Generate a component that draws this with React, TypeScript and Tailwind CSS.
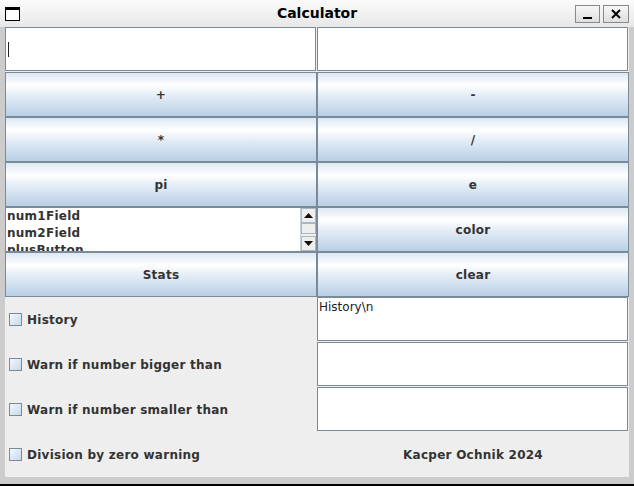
import React from "react";

const btnBg =
  "bg-[linear-gradient(to_bottom,#dde8f3_0%,#ffffff_28%,#e6eef7_50%,#b8cfe5_100%)]";

function MetalButton({ label }: { label: string }) {
  return (
    <div
      className={`flex items-center justify-center border border-[#7a8a99] ${btnBg} text-[12px] font-bold tracking-[0.25px] text-[#333333]`}
    >
      {label}
    </div>
  );
}

function TextField({ caret, text }: { caret?: boolean; text?: string }) {
  return (
    <div className="mb-px mr-px flex border border-[#7a8a99] bg-white">
      {caret && <div className="ml-[2px] mt-[14px] h-[15px] w-px bg-[#222]" />}
      {text && <div className="pl-px pt-[2px] text-[12px] font-normal leading-[14px] text-[#222]">{text}</div>}
    </div>
  );
}

function CheckRow({ label }: { label: string }) {
  return (
    <div className="flex items-center gap-[5px] pl-[4px]">
      <div className="h-[13px] w-[13px] border border-[#7a8a99] bg-[linear-gradient(135deg,#f4f8fc,#c7d8ea)]" />
      <span className="text-[12px] font-bold tracking-[0.25px] text-[#333333]">{label}</span>
    </div>
  );
}

function Arrow({ up }: { up?: boolean }) {
  return (
    <div className="flex h-[15px] items-center justify-center border border-[#a9b8c6] bg-[#eeeeee]">
      <svg width="9" height="5" viewBox="0 0 9 5">
        {up ? <polygon points="0,5 4.5,0 9,5" fill="#111" /> : <polygon points="0,0 4.5,5 9,0" fill="#111" />}
      </svg>
    </div>
  );
}

function ListBox() {
  return (
    <div className="flex overflow-hidden border border-[#7a8a99] bg-white">
      <div className="flex-1 overflow-hidden pl-px text-[12px] font-bold leading-[17px] tracking-[0.25px] text-[#333333]">
        <div>num1Field</div>
        <div>num2Field</div>
        <div>plusButton</div>
      </div>
      <div className="flex w-[16px] flex-col border-l border-[#c8d2dc] bg-[#eeeeee]">
        <Arrow up />
        <div className="h-[11px] border border-[#a9b8c6] bg-[#eeeeee]" />
        <div className="flex-1" />
        <Arrow />
      </div>
    </div>
  );
}

export default function App() {
  return (
    <div
      className="flex h-[486px] w-[634px] flex-col bg-[#cccccc]"
      style={{ fontFamily: "'DejaVu Sans', sans-serif" }}
    >
      {/* title bar */}
      <div className="relative flex h-[27px] items-center bg-[linear-gradient(to_bottom,#fbfbfb,#e7e7e7)] px-[5px]">
        <div className="h-[14px] w-[15px] border border-black border-t-[3px] bg-white" />
        <div className="absolute left-0 right-0 top-[3px] text-center text-[14px] font-bold text-black">
          Calculator
        </div>
        <div className="ml-auto flex gap-[3px]">
          <div className="flex h-[18px] w-[25px] items-end justify-center border border-[#8a8a8a] bg-[linear-gradient(to_bottom,#f6f6f6,#dedede)] pb-[3px]">
            <div className="h-[2px] w-[9px] bg-black" />
          </div>
          <div className="flex h-[18px] w-[26px] items-center justify-center border border-[#8a8a8a] bg-[linear-gradient(to_bottom,#f6f6f6,#dedede)]">
            <svg width="10" height="10" viewBox="0 0 10 10">
              <path d="M1 1 L9 9 M9 1 L1 9" stroke="#000" strokeWidth="2" />
            </svg>
          </div>
        </div>
      </div>

      {/* content */}
      <div className="mx-[5px] grid h-[450px] grid-cols-2 grid-rows-[repeat(10,45px)] bg-[#eeeeee]">
        <TextField caret />
        <TextField />
        <MetalButton label="+" />
        <MetalButton label="-" />
        <MetalButton label="*" />
        <MetalButton label="/" />
        <MetalButton label="pi" />
        <MetalButton label="e" />
        <ListBox />
        <MetalButton label="color" />
        <MetalButton label="Stats" />
        <MetalButton label="clear" />
        <CheckRow label="History" />
        <TextField text="History\n" />
        <CheckRow label="Warn if number bigger than" />
        <TextField />
        <CheckRow label="Warn if number smaller than" />
        <TextField />
        <CheckRow label="Division by zero warning" />
        <div className="flex items-center justify-center text-[12px] font-bold tracking-[0.25px] text-[#333333]">
          Kacper Ochnik 2024
        </div>
      </div>

      <div className="h-[7px]" />
      <div className="h-[2px] bg-black" />
    </div>
  );
}
